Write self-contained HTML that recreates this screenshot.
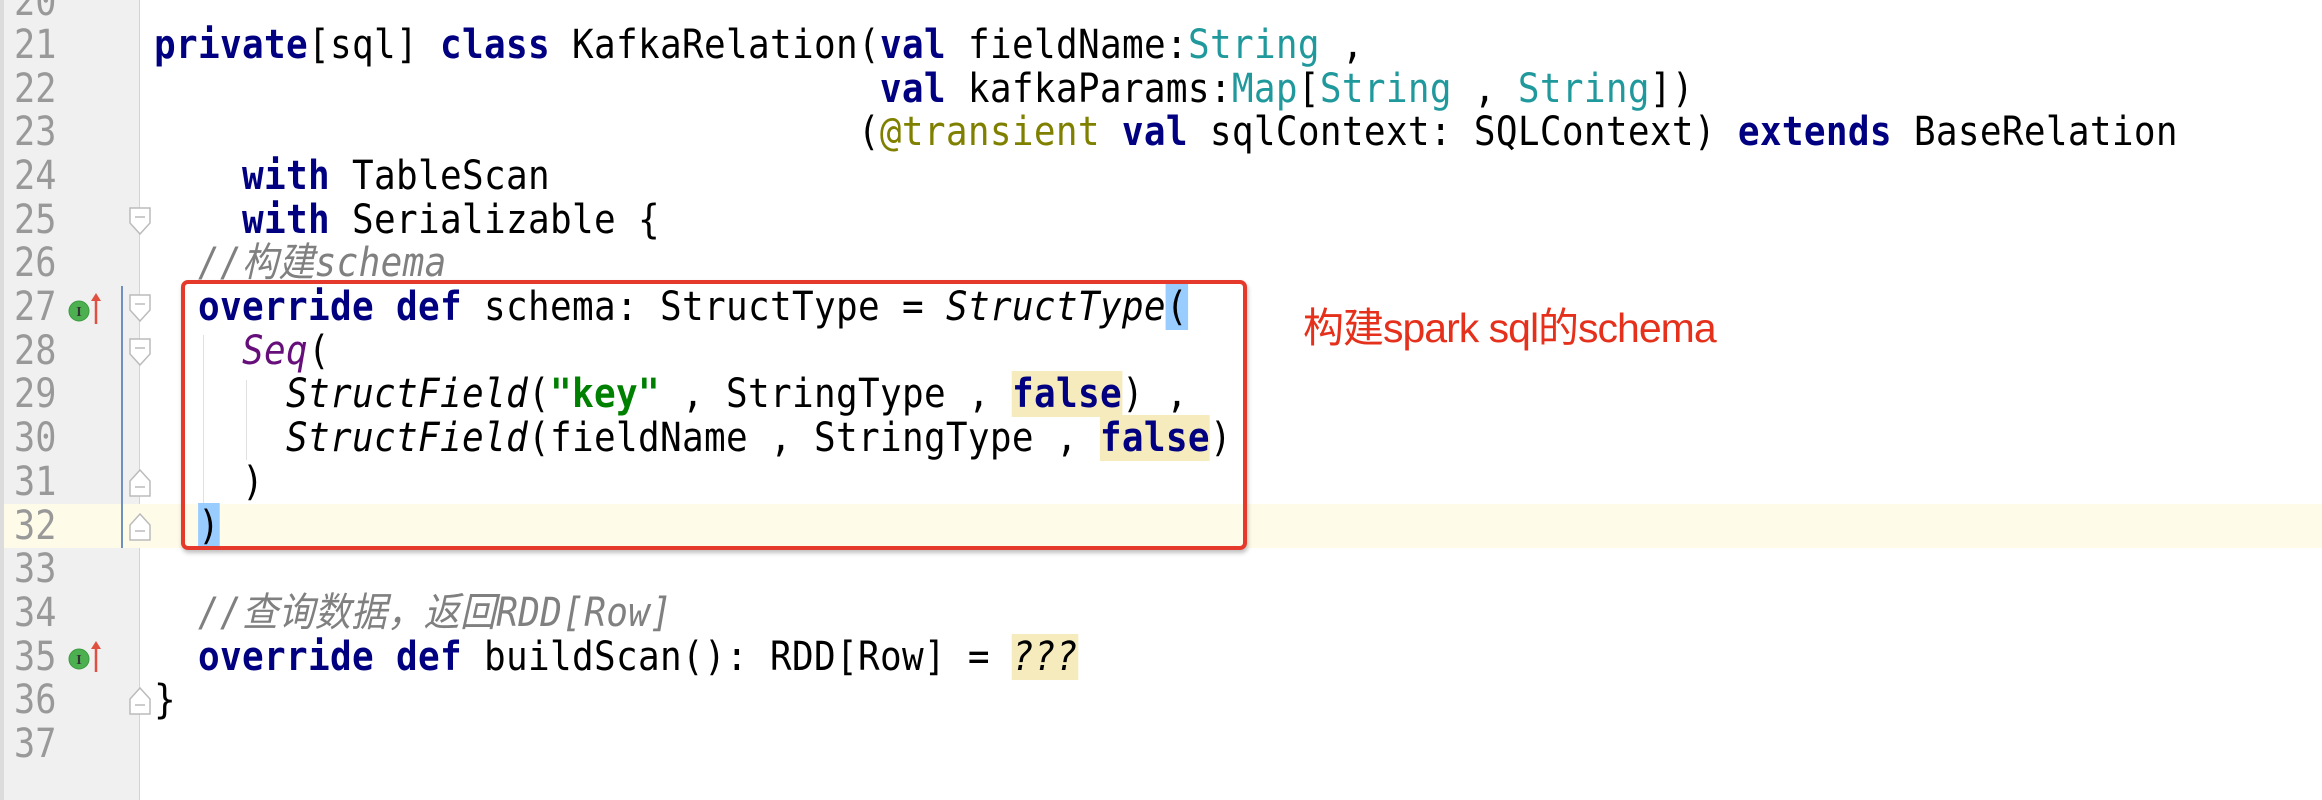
<!DOCTYPE html>
<html><head><meta charset="utf-8"><style>
html,body{margin:0;padding:0;background:#fff;width:2322px;height:800px;overflow:hidden;position:relative}
.gut{position:absolute;left:0;top:0;width:140px;height:800px;background:#f0f0f0;border-left:4px solid #dcdcdc;box-sizing:border-box;border-right:1px solid #d4d4d4}
.ln{position:absolute;left:14px;width:80px;font:40px "DejaVu Sans Mono","Liberation Mono",monospace;color:#999;line-height:44px;transform:scaleX(0.88);transform-origin:0 0}
.l{position:absolute;left:154px;white-space:pre;font:40px "DejaVu Sans Mono","Liberation Mono",monospace;letter-spacing:0.36px;line-height:44px;color:#000;transform:scaleX(0.9);transform-origin:0 0}
.k{color:#000080;font-weight:bold}
.t{color:#20999d}
.a{color:#808000}
.s{color:#008000;font-weight:bold}
.c{color:#808080;font-style:italic}
.i{font-style:italic}
.p{color:#660e7a;font-style:italic}
.y{background:#f6ebbc}
.b{background:#99ccff}
.hl{position:absolute;left:140px;right:0;height:44px;background:#fefbe8}
.fold{position:absolute;left:129px;width:22px;height:28px}
.box{position:absolute;left:181px;top:280px;width:1066px;height:270px;border:4px solid #e5392b;border-radius:7px;box-sizing:border-box;box-shadow:1px 3px 4px rgba(0,0,0,.25)}
.ann{position:absolute;left:1303px;top:294px;font:41px "Liberation Sans","Noto Sans CJK SC",sans-serif;color:#e5301c;letter-spacing:-1px}
.g{position:absolute;width:1px;background:#e0e0e0}
</style></head><body>
<div class="hl" style="top:504px"></div>
<div class="gut"></div>
<div style="position:absolute;left:4px;top:504px;width:136px;height:44px;background:#fefbe8"></div>
<div style="position:absolute;left:121px;top:286px;width:2px;height:262px;background:#6f8fbf"></div>

<div class="ln" style="top:-20px">20</div>
<div class="ln" style="top:23px">21</div>
<div class="ln" style="top:67px">22</div>
<div class="ln" style="top:110px">23</div>
<div class="ln" style="top:154px">24</div>
<div class="ln" style="top:198px">25</div>
<div class="ln" style="top:241px">26</div>
<div class="ln" style="top:285px">27</div>
<div class="ln" style="top:329px">28</div>
<div class="ln" style="top:372px">29</div>
<div class="ln" style="top:416px">30</div>
<div class="ln" style="top:460px">31</div>
<div class="ln" style="top:504px">32</div>
<div class="ln" style="top:547px">33</div>
<div class="ln" style="top:591px">34</div>
<div class="ln" style="top:635px">35</div>
<div class="ln" style="top:678px">36</div>
<div class="ln" style="top:722px">37</div>

<svg style="position:absolute;left:66px;top:290px" width="40" height="36"><circle cx="13" cy="21" r="10" fill="#4cb050" stroke="#3a9a3e"/><text x="13" y="26" font-size="14" font-family="Liberation Serif,serif" font-weight="bold" text-anchor="middle" fill="#333">I</text><line x1="30" y1="34" x2="30" y2="6" stroke="#e05040" stroke-width="2.5"/><path d="M25 11 L30 3 L35 11 Z" fill="#e05040"/></svg>
<svg style="position:absolute;left:66px;top:638px" width="40" height="36"><circle cx="13" cy="21" r="10" fill="#4cb050" stroke="#3a9a3e"/><text x="13" y="26" font-size="14" font-family="Liberation Serif,serif" font-weight="bold" text-anchor="middle" fill="#333">I</text><line x1="30" y1="34" x2="30" y2="6" stroke="#e05040" stroke-width="2.5"/><path d="M25 11 L30 3 L35 11 Z" fill="#e05040"/></svg>

<svg class="fold" style="top:207px" viewBox="0 0 22 28"><path d="M1 1H21V16L11 27L1 16Z" fill="#fff" stroke="#bbb" stroke-width="1.5"/><line x1="6" y1="10" x2="16" y2="10" stroke="#bbb" stroke-width="1.5"/></svg>
<svg class="fold" style="top:294px" viewBox="0 0 22 28"><path d="M1 1H21V16L11 27L1 16Z" fill="#fff" stroke="#bbb" stroke-width="1.5"/><line x1="6" y1="10" x2="16" y2="10" stroke="#bbb" stroke-width="1.5"/></svg>
<svg class="fold" style="top:338px" viewBox="0 0 22 28"><path d="M1 1H21V16L11 27L1 16Z" fill="#fff" stroke="#bbb" stroke-width="1.5"/><line x1="6" y1="10" x2="16" y2="10" stroke="#bbb" stroke-width="1.5"/></svg>
<svg class="fold" style="top:469px" viewBox="0 0 22 28"><path d="M1 27H21V12L11 1L1 12Z" fill="#fff" stroke="#bbb" stroke-width="1.5"/><line x1="6" y1="18" x2="16" y2="18" stroke="#bbb" stroke-width="1.5"/></svg>
<svg class="fold" style="top:513px" viewBox="0 0 22 28"><path d="M1 27H21V12L11 1L1 12Z" fill="#fff" stroke="#bbb" stroke-width="1.5"/><line x1="6" y1="18" x2="16" y2="18" stroke="#bbb" stroke-width="1.5"/></svg>
<svg class="fold" style="top:687px" viewBox="0 0 22 28"><path d="M1 27H21V12L11 1L1 12Z" fill="#fff" stroke="#bbb" stroke-width="1.5"/><line x1="6" y1="18" x2="16" y2="18" stroke="#bbb" stroke-width="1.5"/></svg>

<div class="g" style="left:203px;top:335px;height:170px"></div>
<div class="g" style="left:246px;top:380px;height:80px"></div>

<div class="l" style="top:23px"><span class="k">private</span>[sql] <span class="k">class</span> KafkaRelation(<span class="k">val</span> fieldName:<span class="t">String</span> ,</div>
<div class="l" style="top:67px">                                 <span class="k">val</span> kafkaParams:<span class="t">Map</span>[<span class="t">String</span> , <span class="t">String</span>])</div>
<div class="l" style="top:110px">                                (<span class="a">@transient</span> <span class="k">val</span> sqlContext: SQLContext) <span class="k">extends</span> BaseRelation</div>
<div class="l" style="top:154px">    <span class="k">with</span> TableScan</div>
<div class="l" style="top:198px">    <span class="k">with</span> Serializable {</div>
<div class="l" style="top:241px">  <span class="c">//构建schema</span></div>
<div class="l" style="top:285px">  <span class="k">override def</span> schema: StructType = <span class="i">StructType</span><span class="b">(</span></div>
<div class="l" style="top:329px">    <span class="p">Seq</span>(</div>
<div class="l" style="top:372px">      <span class="i">StructField</span>(<span class="s">"key"</span> , StringType , <span class="k y">false</span>) ,</div>
<div class="l" style="top:416px">      <span class="i">StructField</span>(fieldName , StringType , <span class="k y">false</span>)</div>
<div class="l" style="top:460px">    )</div>
<div class="l" style="top:504px">  <span class="b">)</span></div>
<div class="l" style="top:591px">  <span class="c">//查询数据，返回RDD[Row]</span></div>
<div class="l" style="top:635px">  <span class="k">override def</span> buildScan(): RDD[Row] = <span class="i y">???</span></div>
<div class="l" style="top:678px">}</div>

<div class="box"></div>
<div class="ann">构建spark sql的schema</div>
</body></html>
